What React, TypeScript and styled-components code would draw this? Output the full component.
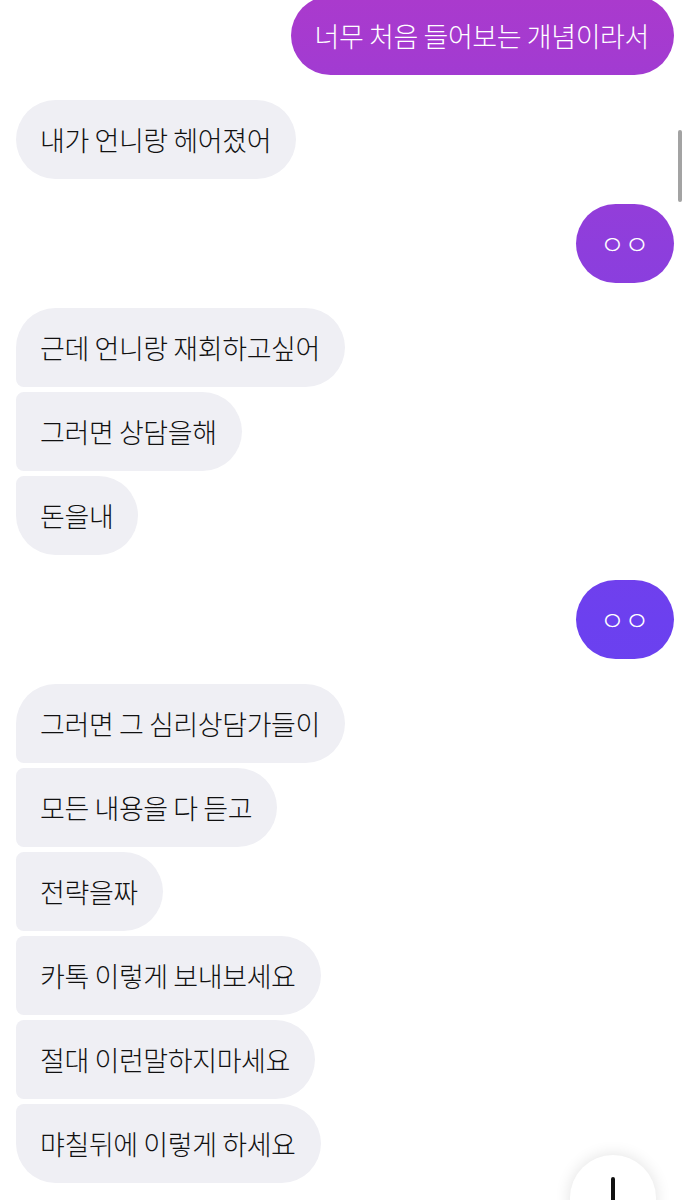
import React from "react";
import styled, { createGlobalStyle, css } from "styled-components";

type Pos = "single" | "first" | "middle" | "last";

const GlobalStyle = createGlobalStyle`
  html, body {
    margin: 0;
    padding: 0;
    background: #ffffff;
    overflow: hidden;
  }
  body {
    font-family: "Noto Sans CJK KR", "Noto Sans", sans-serif;
    -webkit-font-smoothing: antialiased;
  }
`;

const Screen = styled.div`
  position: relative;
  width: 690px;
  height: 1200px;
  overflow: hidden;
  background: #ffffff;
`;

const Thread = styled.div`
  display: flex;
  flex-direction: column;
  gap: 25px;
  padding: 0 16px;
  margin-top: -4px;
`;

const Group = styled.div<{ $mine: boolean }>`
  display: flex;
  flex-direction: column;
  gap: 5px;
  align-items: ${(p) => (p.$mine ? "flex-end" : "flex-start")};
`;

const BIG = 40;
const SMALL = 8;

const corners = (mine: boolean, pos: Pos) => {
  const top = pos === "single" || pos === "first" ? BIG : SMALL;
  const bottom = pos === "single" || pos === "last" ? BIG : SMALL;
  if (mine) return `${BIG}px ${top}px ${bottom}px ${BIG}px`;
  return `${top}px ${BIG}px ${BIG}px ${bottom}px`;
};

const Bubble = styled.div<{ $mine: boolean; $pos: Pos }>`
  box-sizing: border-box;
  height: 79px;
  display: flex;
  align-items: center;
  padding: 0 25px 0 24px;
  font-size: 27px;
  font-weight: 300;
  letter-spacing: -0.4px;
  line-height: 1;
  white-space: nowrap;
  border-radius: ${(p) => corners(p.$mine, p.$pos)};
  ${(p) =>
    p.$mine
      ? css`
          color: #ffffff;
          background: linear-gradient(
            180deg,
            #aa3acd 0px,
            #8e3edc 245px,
            #6c40ef 620px,
            #5848f6 1200px
          );
          background-attachment: fixed;
        `
      : css`
          color: #111111;
          background: #efeff4;
        `}
`;

const ScrollThumb = styled.div`
  position: absolute;
  top: 130px;
  right: 8px;
  width: 4px;
  height: 72px;
  border-radius: 2px;
  background: #a3a3a3;
`;

const JumpButton = styled.button`
  position: absolute;
  left: 570px;
  top: 1155px;
  width: 86px;
  height: 86px;
  padding: 0;
  border: none;
  border-radius: 50%;
  background: #ffffff;
  box-shadow: 0 0 16px rgba(0, 0, 0, 0.12);
  display: flex;
  justify-content: center;
  align-items: flex-start;
`;

const ArrowDown = () => (
  <svg width="86" height="86" viewBox="0 0 86 86" fill="none">
    <path
      d="M43 24 V62 M30 50 L43 63 L56 50"
      stroke="#111111"
      strokeWidth="4"
      strokeLinecap="round"
      strokeLinejoin="round"
    />
  </svg>
);

const groups: { mine: boolean; lines: string[] }[] = [
  { mine: true, lines: ["너무 처음 들어보는 개념이라서"] },
  { mine: false, lines: ["내가 언니랑 헤어졌어"] },
  { mine: true, lines: ["ㅇㅇ"] },
  { mine: false, lines: ["근데 언니랑 재회하고싶어", "그러면 상담을해", "돈을내"] },
  { mine: true, lines: ["ㅇㅇ"] },
  {
    mine: false,
    lines: [
      "그러면 그 심리상담가들이",
      "모든 내용을 다 듣고",
      "전략을짜",
      "카톡 이렇게 보내보세요",
      "절대 이런말하지마세요",
      "먀칠뒤에 이렇게 하세요",
    ],
  },
];

const posOf = (i: number, n: number): Pos => {
  if (n === 1) return "single";
  if (i === 0) return "first";
  if (i === n - 1) return "last";
  return "middle";
};

const App = () => {
  return (
    <Screen>
      <GlobalStyle />
      <Thread>
        {groups.map((g, gi) => (
          <Group key={gi} $mine={g.mine}>
            {g.lines.map((line, i) => (
              <Bubble key={i} $mine={g.mine} $pos={posOf(i, g.lines.length)}>
                {line}
              </Bubble>
            ))}
          </Group>
        ))}
      </Thread>
      <ScrollThumb />
      <JumpButton aria-label="맨 아래로">
        <ArrowDown />
      </JumpButton>
    </Screen>
  );
};

export default App;
